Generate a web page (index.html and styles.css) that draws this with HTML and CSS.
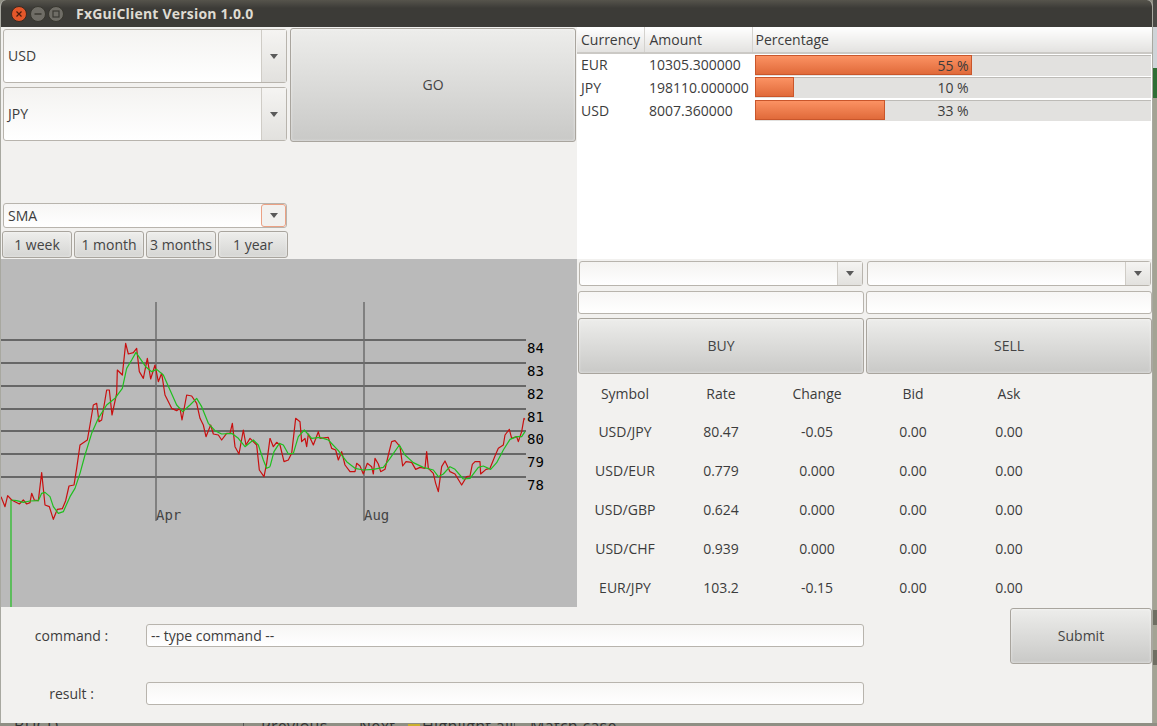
FILE: index.html
```html
<!DOCTYPE html>
<html lang="en">
<head>
    <meta charset="UTF-8">
    <title>FxGuiClient Version 1.0.0</title>
    <link rel="stylesheet" href="styles.css">
</head>

<body>
    <div class="desktop">
        <div class="window">
            <!-- Title bar -->
            <header class="titlebar">
                <svg class="wm-buttons" width="66" height="27" viewBox="0 0 66 27">
                    <circle cx="19" cy="14" r="7.5" fill="#e4572a" stroke="#3a2a22"/>
                    <path d="M16.5 11.5l5 5M21.5 11.5l-5 5" stroke="#4a1c0c" stroke-width="1.2"/>
                    <circle cx="38" cy="14" r="7.5" fill="#6f6d66" stroke="#38372f"/>
                    <path d="M34.5 14h7" stroke="#3a3932" stroke-width="1.4"/>
                    <circle cx="56" cy="14" r="7.5" fill="#6f6d66" stroke="#38372f"/>
                    <rect x="53" y="11" width="6" height="6" fill="none" stroke="#3a3932" stroke-width="1.2"/>
                </svg>
                <h1 class="title">FxGuiClient Version 1.0.0</h1>
            </header>

            <main class="panes">
                <!-- Top left: pair selection -->
                <section class="controls">
                    <div class="pair-row">
                        <div class="pair-combos">
                            <div class="combo combo-tall"><span class="combo-value">USD</span><span class="combo-arrow"><i></i></span></div>
                            <div class="combo combo-tall"><span class="combo-value">JPY</span><span class="combo-arrow"><i></i></span></div>
                        </div>
                        <button class="btn btn-go" type="button">GO</button>
                    </div>
                    <div class="combo combo-sma"><span class="combo-value">SMA</span><span class="combo-arrow focused"><i></i></span></div>
                    <div class="ranges">
                        <button class="btn btn-range" type="button">1 week</button>
                        <button class="btn btn-range" type="button">1 month</button>
                        <button class="btn btn-range" type="button">3 months</button>
                        <button class="btn btn-range" type="button">1 year</button>
                    </div>
                </section>

                <!-- Top right: holdings -->
                <section class="holdings">
                    <table class="holdings-table">
                        <thead>
                            <tr><th class="col-currency">Currency</th><th class="col-amount">Amount</th><th>Percentage</th></tr>
                        </thead>
                        <tbody>
                            <tr>
                                <td>EUR</td><td>10305.300000</td>
                                <td><div class="bar"><div class="bar-fill" style="width: 217px"></div><span class="bar-text">55 %</span></div></td>
                            </tr>
                            <tr>
                                <td>JPY</td><td>198110.000000</td>
                                <td><div class="bar"><div class="bar-fill" style="width: 39px"></div><span class="bar-text">10 %</span></div></td>
                            </tr>
                            <tr>
                                <td>USD</td><td>8007.360000</td>
                                <td><div class="bar"><div class="bar-fill" style="width: 130px"></div><span class="bar-text">33 %</span></div></td>
                            </tr>
                        </tbody>
                    </table>
                </section>

                <!-- Chart -->
                <section class="chart">
                    <svg width="576" height="348" viewBox="1 259 576 348">
                        <g class="grid-h">
                            <path d="M1 340H526M1 363H526M1 386H526M1 409H526M1 431H526M1 454H526M1 477H526"/>
                        </g>
                        <path class="grid-v" d="M156 302V521M364 302V521"/>
                        <path class="sma" d="M11 607V500"/>
                        <g transform="translate(0 330) scale(.33333)">
                            <polyline class="price" points="3,500 15,530 23,497 35,510 45,515 58,522 70,510 80,522 90,518 95,490 103,510 115,512 125,428 135,525 148,530 160,568 172,538 187,536 197,512 207,468 222,465 230,415 240,345 262,330 270,285 280,225 290,220 297,275 305,270 320,180 328,180 336,255 350,190 352,120 367,135 377,40 385,72 400,68 410,55 418,125 430,145 442,85 452,147 465,105 475,155 485,130 495,195 515,235 530,242 540,235 546,270 560,195 575,198 590,220 600,265 610,285 618,320 632,285 640,312 655,315 665,330 680,310 690,310 697,280 705,350 717,372 730,300 738,345 750,325 770,345 778,420 792,440 800,400 810,325"/>
                            <polyline class="sma" points="35,510 50,512 70,517 90,513 115,512 125,490 135,487 150,500 160,530 175,550 190,545 210,500 225,475 240,430 255,375 275,310 295,265 320,225 345,205 367,175 380,115 395,90 408,67 420,85 437,110 455,125 470,118 490,135 510,180 530,225 548,245 570,225 590,205 605,230 625,280 645,302 665,312 695,310 715,325 735,350 760,330 775,345 790,390 800,415 810,410"/>
                        </g>
                        <g transform="translate(270 330) scale(.33333)">
                            <polyline class="price" points="0,325 10,350 20,337 30,345 42,395 55,390 65,370 77,265 90,275 95,335 105,325 110,350 115,312 130,345 145,305 150,325 175,322 185,355 197,360 205,390 215,365 225,405 240,425 255,425 260,400 270,408 280,432 292,400 305,410 310,432 315,385 325,402 332,425 345,418 355,375 365,335 375,332 390,350 398,408 408,395 425,397 437,418 450,412 465,415 470,365 475,415 490,430 497,460 505,485 515,410 525,393 540,425 555,432 575,465 590,440 600,438 607,403 615,395 630,395 632,432 648,418 660,415 675,378 685,355 700,345 705,315 718,298 725,325 740,320 745,335 755,305 762,265 765,268"/>
                            <polyline class="sma" points="0,410 12,365 28,340 40,345 55,372 70,370 85,320 103,300 125,325 150,322 175,330 205,362 230,395 255,415 280,420 310,418 340,412 360,385 388,345 405,375 430,398 460,412 490,420 505,440 520,432 540,410 555,418 580,447 600,445 625,412 640,408 662,418 680,398 700,360 720,328 740,320 755,320 765,305"/>
                        </g>
                        <g class="y-labels">
                            <text x="527" y="353">84</text>
                            <text x="527" y="376">83</text>
                            <text x="527" y="399">82</text>
                            <text x="527" y="422">81</text>
                            <text x="527" y="444">80</text>
                            <text x="527" y="467">79</text>
                            <text x="527" y="490">78</text>
                        </g>
                        <g class="x-labels">
                            <text x="156" y="520">Apr</text>
                            <text x="364" y="520">Aug</text>
                        </g>
                    </svg>
                </section>

                <!-- Bottom right: trading -->
                <section class="trade">
                    <div class="trade-form">
                        <div class="combo combo-small"><span class="combo-value"></span><span class="combo-arrow"><i></i></span></div>
                        <div class="combo combo-small"><span class="combo-value"></span><span class="combo-arrow"><i></i></span></div>
                        <input class="field" type="text">
                        <input class="field" type="text">
                        <button class="btn btn-trade" type="button">BUY</button>
                        <button class="btn btn-trade" type="button">SELL</button>
                    </div>
                    <div class="rates">
                        <span>Symbol</span><span>Rate</span><span>Change</span><span>Bid</span><span>Ask</span>
                        <span>USD/JPY</span><span>80.47</span><span>-0.05</span><span>0.00</span><span>0.00</span>
                        <span>USD/EUR</span><span>0.779</span><span>0.000</span><span>0.00</span><span>0.00</span>
                        <span>USD/GBP</span><span>0.624</span><span>0.000</span><span>0.00</span><span>0.00</span>
                        <span>USD/CHF</span><span>0.939</span><span>0.000</span><span>0.00</span><span>0.00</span>
                        <span>EUR/JPY</span><span>103.2</span><span>-0.15</span><span>0.00</span><span>0.00</span>
                    </div>
                </section>
            </main>

            <!-- Command line -->
            <footer class="console">
                <label class="console-label" for="command">command :</label>
                <input class="field console-field" id="command" type="text" value="-- type command --">
                <button class="btn btn-submit" type="button">Submit</button>
                <label class="console-label" for="result">result :</label>
                <input class="field console-field" id="result" type="text">
            </footer>
        </div>
        <div class="desk-right"></div>
    </div>

    <!-- What shows of the window behind -->
    <div class="behind">
        <span class="behind-a">BUCD</span>
        <i class="behind-sep sep-a"></i>
        <span class="behind-b">Previous</span>
        <span class="behind-c">Next</span>
        <i class="behind-mark"></i>
        <span class="behind-d">Highlight all</span>
        <i class="behind-sep sep-b"></i>
        <span class="behind-e">Match case</span>
    </div>
</body>
</html>
```

FILE: styles.css
```css
/* styling */
* {
    margin: 0;
    padding: 0;
    box-sizing: border-box;
    font-family: "Open Sans", "DejaVu Sans", sans-serif;
}
body {
    width: 1157px;
    height: 726px;
    overflow: hidden;
    background: #8f8f84;
    color: #3c3c3c;
    font-size: 14px;
}
.desktop {
    display: flex;
    height: 723px;
}
.window {
    width: 1153px;
    height: 723px;
    display: flex;
    flex-direction: column;
    background: #f2f1ef;
    border-left: 1px solid #a8a8a0;
    border-right: 1px solid #a8a8a0;
    border-radius: 6px 6px 0 0;
    overflow: hidden;
}
.desk-right {
    width: 4px;
    background: linear-gradient(#4a4a46 0, #4a4a46 27px, #cfd4d8 27px, #cfd4d8 68px, #2f6f35 68px, #2f6f35 98px, #a3a394 98px, #a3a394 610px, #6e6e62 610px, #6e6e62 625px, #a3a394 625px, #a3a394 650px, #6e6e62 650px, #6e6e62 665px, #a3a394 665px);
}

/* title bar */
.titlebar {
    flex: none;
    height: 27px;
    display: flex;
    align-items: center;
    background: linear-gradient(#56544c, #3c3b37 30%, #3c3b37);
}
.wm-buttons {
    flex: none;
    margin-left: -1px;
}
.title {
    margin-left: 10px;
    font-size: 14px;
    font-weight: 700;
    color: #dfdbd2;
    letter-spacing: 0.2px;
}

.panes {
    flex: none;
    display: grid;
    grid-template-columns: 576px 575px;
    grid-template-rows: 232px 348px;
}

/* shared widgets */
.btn {
    padding-bottom: 2px;
    border: 1px solid #a9a59e;
    border-radius: 3px;
    background: linear-gradient(#ededeb, #c9c9c7);
    box-shadow: inset 0 0 3px rgba(255, 255, 255, 0.6);
    color: #444;
    font-size: 14px;
}
.combo {
    display: flex;
    align-items: stretch;
    border: 1px solid #b8b4ad;
    border-radius: 3px;
    background: linear-gradient(#f4f3f1, #fff);
}
.combo-value {
    flex: 1;
    display: flex;
    align-items: center;
    padding: 0 0 2px 4px;
    font-size: 14px;
}
.combo-arrow {
    flex: none;
    width: 25px;
    display: flex;
    align-items: center;
    justify-content: center;
    border-left: 1px solid #cfccc6;
    background: linear-gradient(#f5f4f2, #e2e1de);
}
.combo-arrow.focused {
    border: 1px solid #eba184;
    border-radius: 3px;
    background: #f2f1ef;
}
.combo-arrow i {
    width: 0;
    height: 0;
    border-left: 4.5px solid transparent;
    border-right: 4.5px solid transparent;
    border-top: 5px solid #5a5a5a;
}
.field {
    display: block;
    height: 23px;
    padding: 0 4px;
    border: 1px solid #b8b4ad;
    border-radius: 3px;
    background: linear-gradient(#f7f6f5, #fff);
    color: #3c3c3c;
    font-size: 14px;
    outline: none;
}

/* top left */
.controls {
    display: flex;
    flex-direction: column;
    padding: 1px 0 0 1px;
}
.pair-row {
    display: flex;
    gap: 3px;
    align-items: flex-start;
}
.pair-combos {
    width: 284px;
    margin: 1px 0 0 1px;
    display: flex;
    flex-direction: column;
    gap: 4px;
}
.combo-tall {
    height: 54px;
}
.btn-go {
    width: 286px;
    height: 114px;
}
.combo-sma {
    width: 284px;
    height: 25px;
    margin: 61px 0 0 1px;
    background: linear-gradient(#f7f6f5, #fff);
}
.combo-sma .combo-value {
    padding-bottom: 0;
}
.ranges {
    display: flex;
    gap: 2px;
    margin-top: 3px;
}
.btn-range {
    width: 70px;
    height: 27px;
    padding-bottom: 0;
    background: linear-gradient(#eeeeec, #d5d5d3);
}

/* holdings table */
.holdings {
    background: #fff;
}
.holdings-table {
    width: 100%;
    border-collapse: collapse;
    table-layout: fixed;
}
.holdings-table th {
    height: 26px;
    padding-left: 5px;
    text-align: left;
    font-weight: 400;
    background: linear-gradient(#fff, #e3e2e0);
    border-bottom: 2px solid #cbc9c5;
    border-right: 1px solid #d4d2ce;
}
.col-currency {
    width: 67px;
}
.col-amount {
    width: 108px;
}
.holdings-table th:first-child,
.holdings-table td:first-child {
    padding-left: 4px;
}
.holdings-table th:last-child {
    padding-left: 3px;
    border-right: none;
}
.holdings-table td {
    height: 23px;
    padding: 0 0 1px 5px;
    white-space: nowrap;
}
.holdings-table td:last-child {
    padding: 0 0 0 3px;
}
.bar {
    position: relative;
    width: 396px;
    height: 21px;
    background: #e2e1df;
    border-top: 1px solid #bdbbb7;
}
.bar-fill {
    height: 20px;
    margin-top: -1px;
    background: linear-gradient(#fb9263, #e06a3a);
    border: 1px solid #c9562b;
}
.bar-text {
    position: absolute;
    top: 0;
    left: 0;
    right: 0;
    line-height: 20px;
    text-align: center;
}

/* chart */
.chart {
    background: #bababa;
}
.chart svg {
    display: block;
}
.grid-h path {
    fill: none;
    stroke: #4c4c4c;
    stroke-width: 1.5;
}
.grid-v {
    fill: none;
    stroke: #6e6e6e;
    stroke-width: 1.5;
}
.price {
    fill: none;
    stroke: #c81010;
    stroke-width: 3.6;
    stroke-linejoin: round;
}
.sma {
    fill: none;
    stroke: #1fbf1f;
    stroke-width: 1.2;
    stroke-linejoin: round;
}
polyline.sma {
    stroke-width: 3.6;
}
.y-labels text {
    font-family: "DejaVu Sans Mono", monospace;
    font-size: 14px;
    fill: #000;
}
.x-labels text {
    font-family: "DejaVu Sans Mono", monospace;
    font-size: 14px;
    fill: #444;
}

/* bottom right */
.trade {
    display: flex;
    flex-direction: column;
    height: 348px;
}
.trade-form {
    display: grid;
    grid-template-columns: 286px 286px;
    grid-template-rows: 26px 23px 56px;
    column-gap: 2px;
    row-gap: 4px;
    padding: 2px 0 0 1px;
}
.combo-small {
    margin: 0 1px 1px;
    height: 25px;
}
.trade-form .field {
    width: 100%;
}
.btn-trade {
    height: 56px;
}
.rates {
    flex: 1;
    display: grid;
    grid-template-columns: repeat(5, 96px);
    grid-template-rows: 38px repeat(5, 39px);
    align-items: center;
    text-align: center;
}

/* command line */
.console {
    flex: 1;
    display: grid;
    grid-template-columns: 141px 718px 150px 142px;
    grid-template-rows: 58px 58px;
    align-items: center;
}
.console-label {
    padding-bottom: 2px;
    text-align: center;
}
.console-field {
    grid-column: 2;
    width: 718px;
    margin: 0 0 1px 4px;
}
.btn-submit {
    grid-column: 4;
    grid-row: 1;
    width: 142px;
    height: 56px;
}
.console-label:nth-of-type(2) {
    grid-column: 1;
    grid-row: 2;
}

/* window behind */
.behind {
    position: relative;
    height: 3px;
    overflow: hidden;
    font-size: 16px;
    line-height: 15px;
    letter-spacing: 0.3px;
    color: #333;
    background: #8f8f84;
}
.behind span {
    position: absolute;
    top: -4px;
}
.behind-a { left: 14px; }
.behind-b { left: 261px; }
.behind-c { left: 359px; }
.behind-d { left: 422px; }
.behind-e { left: 530px; }
.behind-sep {
    position: absolute;
    top: 0;
    width: 1px;
    height: 3px;
    background: #555;
}
.sep-a { left: 243px; }
.sep-b { left: 514px; }
.behind-mark {
    position: absolute;
    top: 1px;
    left: 408px;
    width: 12px;
    height: 2px;
    background: #c9ae2e;
}
```
